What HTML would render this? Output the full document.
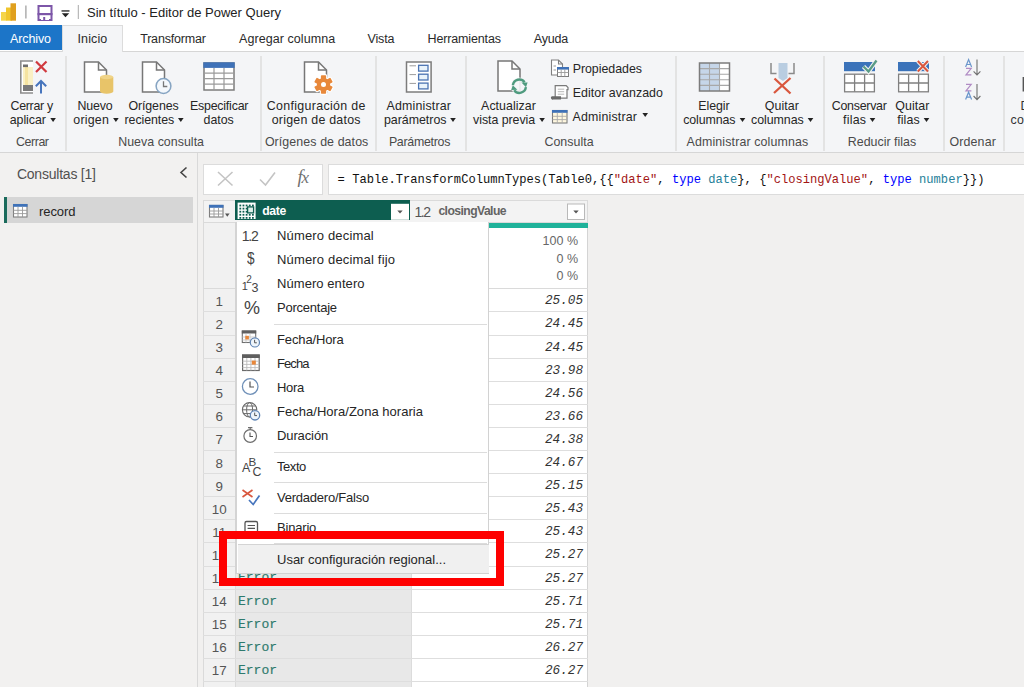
<!DOCTYPE html><html><head><meta charset="utf-8"><style>
*{margin:0;padding:0;box-sizing:border-box}
html,body{width:1024px;height:687px;overflow:hidden;background:#f1f0ef;font-family:"Liberation Sans",sans-serif;color:#252525}
.a{position:absolute;white-space:nowrap}
svg{position:absolute;overflow:visible}
.tab{font-size:12.5px;top:31px;color:#333}
.vsep{width:1.5px;background:#e3e3e3;top:56px;height:95px}
.lbl{font-size:12.2px;color:#333;text-align:center;line-height:14px}
.grp{font-size:12px;color:#555;top:134px}
.car{display:inline-block;width:0;height:0;border-left:3.5px solid transparent;border-right:3.5px solid transparent;border-top:4px solid #333;vertical-align:2px;margin-left:4px}
.mono{font-family:"Liberation Mono",monospace}
.mi{left:276px;font-size:12.5px;color:#252525}
.msep{left:274px;width:213px;height:1px;background:#dcdcdc}
</style></head><body>
<div class="a" style="left:0px;top:0px;width:1024px;height:25px;background:#fff"></div>
<div class="a" style="left:0px;top:25px;width:1024px;height:26px;background:#fff"></div>
<div class="a" style="left:0px;top:51px;width:1024px;height:102px;background:#f4f5f7;border-top:1px solid #d6d6d6;border-bottom:1px solid #d6d6d6"></div>
<svg style="left:0px;top:0px" width="90" height="25" viewBox="0 0 90 25"><defs><linearGradient id="pb" x1="0" y1="0" x2="1" y2="0"><stop offset="0" stop-color="#f2cf3a"/><stop offset="1" stop-color="#e6a21a"/></linearGradient></defs><rect x="1" y="12" width="5.5" height="8.7" fill="#f5d54a"/><rect x="6" y="7.5" width="6" height="13.2" fill="#f0c52c"/><rect x="10.5" y="3.3" width="5.5" height="17.4" fill="#e0a01e"/><rect x="25.3" y="5.5" width="1.2" height="13" fill="#9a9a9a"/><path d="M38.5 6h13v14h-13z" fill="none" stroke="#7d56a8" stroke-width="2"/><rect x="41" y="15.5" width="8" height="4.5" fill="#fff"/><rect x="43.2" y="17" width="2" height="3" fill="#7d56a8"/><rect x="37.5" y="13" width="15" height="2.2" fill="#7d56a8"/><rect x="61.5" y="10.3" width="8" height="1.3" fill="#222"/><path d="M61.8 13.2h7.4l-3.7 4z" fill="#222"/><rect x="77.8" y="5" width="1" height="14" fill="#aaa"/></svg>
<div class="a" style="left:87.00px;top:5.43px;font-size:13px;letter-spacing:0.011px;color:#222;font-family:'Liberation Sans',sans-serif;">Sin título - Editor de Power Query</div>
<div class="a" style="left:0px;top:25px;width:62px;height:25px;background:#1c75c8"></div>
<div class="a" style="left:10.00px;top:31.88px;font-size:12.5px;letter-spacing:-0.115px;color:#fff;font-family:'Liberation Sans',sans-serif;">Archivo</div>
<div class="a" style="left:62px;top:25px;width:61px;height:27px;background:#f4f5f7;border:1px solid #dcdcdc;border-bottom:none"></div>
<div class="a" style="left:77.50px;top:31.98px;font-size:12.5px;letter-spacing:0.113px;color:#2a2a2a;font-family:'Liberation Sans',sans-serif;">Inicio</div>
<div class="a" style="left:140.20px;top:31.98px;font-size:12.5px;letter-spacing:-0.199px;color:#2a2a2a;font-family:'Liberation Sans',sans-serif;">Transformar</div>
<div class="a" style="left:239.00px;top:31.98px;font-size:12.5px;letter-spacing:0.070px;color:#2a2a2a;font-family:'Liberation Sans',sans-serif;">Agregar columna</div>
<div class="a" style="left:367.50px;top:31.98px;font-size:12.5px;letter-spacing:-0.148px;color:#2a2a2a;font-family:'Liberation Sans',sans-serif;">Vista</div>
<div class="a" style="left:427.50px;top:31.98px;font-size:12.5px;letter-spacing:-0.139px;color:#2a2a2a;font-family:'Liberation Sans',sans-serif;">Herramientas</div>
<div class="a" style="left:533.70px;top:31.98px;font-size:12.5px;letter-spacing:-0.163px;color:#2a2a2a;font-family:'Liberation Sans',sans-serif;">Ayuda</div>
<div class="a vsep" style="left:65px"></div>
<div class="a vsep" style="left:260px"></div>
<div class="a vsep" style="left:375px"></div>
<div class="a vsep" style="left:465px"></div>
<div class="a vsep" style="left:675px"></div>
<div class="a vsep" style="left:823px"></div>
<div class="a vsep" style="left:943px"></div>
<div class="a vsep" style="left:1003px"></div>
<div class="a" style="left:10.50px;top:98.77px;font-size:12.4px;letter-spacing:-0.285px;color:#262626;font-family:'Liberation Sans',sans-serif;">Cerrar y</div>
<div class="a" style="left:9.70px;top:112.77px;font-size:12.4px;letter-spacing:-0.036px;color:#262626;font-family:'Liberation Sans',sans-serif;">aplicar</div>
<div class="a" style="left:77.60px;top:98.77px;font-size:12.4px;letter-spacing:-0.184px;color:#262626;font-family:'Liberation Sans',sans-serif;">Nuevo</div>
<div class="a" style="left:73.30px;top:112.77px;font-size:12.4px;letter-spacing:0.206px;color:#262626;font-family:'Liberation Sans',sans-serif;">origen</div>
<div class="a" style="left:128.40px;top:98.77px;font-size:12.4px;letter-spacing:-0.092px;color:#262626;font-family:'Liberation Sans',sans-serif;">Orígenes</div>
<div class="a" style="left:124.50px;top:112.77px;font-size:12.4px;letter-spacing:-0.064px;color:#262626;font-family:'Liberation Sans',sans-serif;">recientes</div>
<div class="a" style="left:189.90px;top:98.77px;font-size:12.4px;letter-spacing:-0.204px;color:#262626;font-family:'Liberation Sans',sans-serif;">Especificar</div>
<div class="a" style="left:203.50px;top:112.77px;font-size:12.4px;letter-spacing:-0.012px;color:#262626;font-family:'Liberation Sans',sans-serif;">datos</div>
<div class="a" style="left:266.80px;top:98.77px;font-size:12.4px;letter-spacing:0.330px;color:#262626;font-family:'Liberation Sans',sans-serif;">Configuración de</div>
<div class="a" style="left:271.70px;top:112.77px;font-size:12.4px;letter-spacing:0.243px;color:#262626;font-family:'Liberation Sans',sans-serif;">origen de datos</div>
<div class="a" style="left:386.60px;top:98.77px;font-size:12.4px;letter-spacing:0.169px;color:#262626;font-family:'Liberation Sans',sans-serif;">Administrar</div>
<div class="a" style="left:384.00px;top:112.77px;font-size:12.4px;letter-spacing:-0.024px;color:#262626;font-family:'Liberation Sans',sans-serif;">parámetros</div>
<div class="a" style="left:481.10px;top:98.77px;font-size:12.4px;letter-spacing:0.029px;color:#262626;font-family:'Liberation Sans',sans-serif;">Actualizar</div>
<div class="a" style="left:473.10px;top:112.77px;font-size:12.4px;letter-spacing:-0.059px;color:#262626;font-family:'Liberation Sans',sans-serif;">vista previa</div>
<div class="a" style="left:698.30px;top:98.77px;font-size:12.4px;letter-spacing:-0.083px;color:#262626;font-family:'Liberation Sans',sans-serif;">Elegir</div>
<div class="a" style="left:683.30px;top:112.77px;font-size:12.4px;letter-spacing:-0.139px;color:#262626;font-family:'Liberation Sans',sans-serif;">columnas</div>
<div class="a" style="left:764.70px;top:98.77px;font-size:12.4px;letter-spacing:0.088px;color:#262626;font-family:'Liberation Sans',sans-serif;">Quitar</div>
<div class="a" style="left:751.00px;top:112.77px;font-size:12.4px;letter-spacing:-0.039px;color:#262626;font-family:'Liberation Sans',sans-serif;">columnas</div>
<div class="a" style="left:831.80px;top:98.77px;font-size:12.4px;letter-spacing:-0.262px;color:#262626;font-family:'Liberation Sans',sans-serif;">Conservar</div>
<div class="a" style="left:843.10px;top:112.77px;font-size:12.4px;letter-spacing:0.215px;color:#262626;font-family:'Liberation Sans',sans-serif;">filas</div>
<div class="a" style="left:895.30px;top:98.77px;font-size:12.4px;letter-spacing:0.088px;color:#262626;font-family:'Liberation Sans',sans-serif;">Quitar</div>
<div class="a" style="left:897.20px;top:112.77px;font-size:12.4px;letter-spacing:0.115px;color:#262626;font-family:'Liberation Sans',sans-serif;">filas</div>
<div class="a" style="left:16.00px;top:134.87px;font-size:12.4px;letter-spacing:-0.425px;color:#4a4a4a;font-family:'Liberation Sans',sans-serif;">Cerrar</div>
<div class="a" style="left:118.20px;top:134.87px;font-size:12.4px;letter-spacing:0.031px;color:#4a4a4a;font-family:'Liberation Sans',sans-serif;">Nueva consulta</div>
<div class="a" style="left:264.90px;top:134.87px;font-size:12.4px;letter-spacing:0.092px;color:#4a4a4a;font-family:'Liberation Sans',sans-serif;">Orígenes de datos</div>
<div class="a" style="left:388.90px;top:134.87px;font-size:12.4px;letter-spacing:-0.286px;color:#4a4a4a;font-family:'Liberation Sans',sans-serif;">Parámetros</div>
<div class="a" style="left:544.40px;top:134.87px;font-size:12.4px;letter-spacing:0.064px;color:#4a4a4a;font-family:'Liberation Sans',sans-serif;">Consulta</div>
<div class="a" style="left:686.60px;top:134.87px;font-size:12.4px;letter-spacing:0.130px;color:#4a4a4a;font-family:'Liberation Sans',sans-serif;">Administrar columnas</div>
<div class="a" style="left:847.80px;top:134.87px;font-size:12.4px;letter-spacing:0.014px;color:#4a4a4a;font-family:'Liberation Sans',sans-serif;">Reducir filas</div>
<div class="a" style="left:949.40px;top:134.87px;font-size:12.4px;letter-spacing:0.171px;color:#4a4a4a;font-family:'Liberation Sans',sans-serif;">Ordenar</div>
<div class="a" style="left:1020.50px;top:98.77px;font-size:12.4px;letter-spacing:0.000px;color:#333;font-family:'Liberation Sans',sans-serif;">D</div>
<div class="a" style="left:1010.50px;top:112.77px;font-size:12.4px;letter-spacing:0.418px;color:#333;font-family:'Liberation Sans',sans-serif;">co</div>
<div class="a" style="left:572.70px;top:61.67px;font-size:12.4px;letter-spacing:-0.033px;color:#262626;font-family:'Liberation Sans',sans-serif;">Propiedades</div>
<div class="a" style="left:572.70px;top:85.97px;font-size:12.4px;letter-spacing:0.048px;color:#262626;font-family:'Liberation Sans',sans-serif;">Editor avanzado</div>
<div class="a" style="left:572.50px;top:109.97px;font-size:12.4px;letter-spacing:0.179px;color:#262626;font-family:'Liberation Sans',sans-serif;">Administrar</div>
<svg style="left:0px;top:0px" width="1024" height="152" viewBox="0 0 1024 152"><path d="M50.30 117.90h5.6l-2.8 4z" fill="#222"/><path d="M113.10 117.90h5.6l-2.8 4z" fill="#222"/><path d="M178.00 117.90h5.6l-2.8 4z" fill="#222"/><path d="M450.20 117.90h5.6l-2.8 4z" fill="#222"/><path d="M539.30 117.90h5.6l-2.8 4z" fill="#222"/><path d="M739.70 117.90h5.6l-2.8 4z" fill="#222"/><path d="M807.70 117.90h5.6l-2.8 4z" fill="#222"/><path d="M869.70 117.90h5.6l-2.8 4z" fill="#222"/><path d="M923.70 117.90h5.6l-2.8 4z" fill="#222"/><path d="M642.4 113h5.6l-2.8 4z" fill="#222"/></svg>
<svg style="left:0px;top:0px" width="1024" height="152" viewBox="0 0 1024 152"><rect x="21" y="61" width="12" height="32" fill="#fff"/><path d="M33 61H20.8V93H33" fill="none" stroke="#8c8c8c" stroke-width="1.6"/><rect x="23" y="67" width="10" height="18" fill="#faf0c4"/><rect x="25" y="67" width="3" height="18" fill="#f5e3a0"/><rect x="23" y="64.5" width="5" height="2.6" fill="#6e6e6e"/><rect x="23" y="85" width="10" height="6" fill="#7a7a7a"/><path d="M36 61.5L46.5 72M46.5 61.5L36 72" stroke="#d13a3f" stroke-width="2.2"/><path d="M41 93.5V81.5M35.8 86.3L41 81 46.2 86.3" stroke="#4775bd" stroke-width="2" fill="none"/><path d="M84.5 62H98.5L106.5 70V92H84.5Z" fill="#fff" stroke="#777" stroke-width="1.5" stroke-linejoin="miter"/><path d="M98.5 62V70H106.5" fill="none" stroke="#777" stroke-width="1.5"/><path d="M100 77V91.5A6.65 2.2 0 0 0 113.3 91.5V77Z" fill="#e8c469"/><ellipse cx="106.65" cy="77" rx="6.65" ry="2.2" fill="#f0d488"/><path d="M142.5 62H156.5L164.5 70V92H142.5Z" fill="#fff" stroke="#777" stroke-width="1.5" stroke-linejoin="miter"/><path d="M156.5 62V70H164.5" fill="none" stroke="#777" stroke-width="1.5"/><circle cx="163.5" cy="86" r="7.4" fill="#f4f8fc" stroke="#86a4c2" stroke-width="1.5"/><path d="M163.5 81.2V86.5H167.3" fill="none" stroke="#777" stroke-width="1.3"/><rect x="204" y="63" width="30" height="27" fill="#fff" stroke="#7c7c7c" stroke-width="1.5"/><rect x="203.3" y="62.3" width="31.4" height="5.6" fill="#3f72b8"/><path d="M204 73.2H234M204 78.6H234M204 84.2H234M214 68V90M224 68V90" stroke="#9a9a9a" stroke-width="1.2"/><path d="M304.5 62H318.5L326.5 70V92H304.5Z" fill="#fff" stroke="#777" stroke-width="1.5" stroke-linejoin="miter"/><path d="M318.5 62V70H326.5" fill="none" stroke="#777" stroke-width="1.5"/><g fill="#fff" stroke="#fff" stroke-width="2.2"><rect x="320.9" y="75.2" width="5.2" height="4.2" rx="0.8" transform="rotate(0 323.5 84.5)"/><rect x="320.9" y="75.2" width="5.2" height="4.2" rx="0.8" transform="rotate(60 323.5 84.5)"/><rect x="320.9" y="75.2" width="5.2" height="4.2" rx="0.8" transform="rotate(120 323.5 84.5)"/><rect x="320.9" y="75.2" width="5.2" height="4.2" rx="0.8" transform="rotate(180 323.5 84.5)"/><rect x="320.9" y="75.2" width="5.2" height="4.2" rx="0.8" transform="rotate(240 323.5 84.5)"/><rect x="320.9" y="75.2" width="5.2" height="4.2" rx="0.8" transform="rotate(300 323.5 84.5)"/><circle cx="323.5" cy="84.5" r="6.6"/></g><g fill="#e8883a"><rect x="320.9" y="75.2" width="5.2" height="4.2" rx="0.8" transform="rotate(0 323.5 84.5)"/><rect x="320.9" y="75.2" width="5.2" height="4.2" rx="0.8" transform="rotate(60 323.5 84.5)"/><rect x="320.9" y="75.2" width="5.2" height="4.2" rx="0.8" transform="rotate(120 323.5 84.5)"/><rect x="320.9" y="75.2" width="5.2" height="4.2" rx="0.8" transform="rotate(180 323.5 84.5)"/><rect x="320.9" y="75.2" width="5.2" height="4.2" rx="0.8" transform="rotate(240 323.5 84.5)"/><rect x="320.9" y="75.2" width="5.2" height="4.2" rx="0.8" transform="rotate(300 323.5 84.5)"/><circle cx="323.5" cy="84.5" r="6.6"/></g><circle cx="323.5" cy="84.5" r="2.5" fill="#fff"/><rect x="406.5" y="62" width="24.6" height="30" fill="#fff" stroke="#7c7c7c" stroke-width="1.5"/><path d="M409.5 65.8H416M409.5 74.6H416M409.5 83.4H416" stroke="#9c9c9c" stroke-width="1"/><rect x="418.6" y="65.3" width="9.4" height="5.8" fill="#e9f3fb" stroke="#4a73b2" stroke-width="1.3"/><rect x="418.6" y="74.2" width="9.4" height="5.8" fill="#e9f3fb" stroke="#4a73b2" stroke-width="1.3"/><rect x="418.6" y="83.1" width="9.4" height="5.8" fill="#e9f3fb" stroke="#4a73b2" stroke-width="1.3"/><path d="M498 61H512L520 69V91H498Z" fill="#fff" stroke="#777" stroke-width="1.5" stroke-linejoin="miter"/><path d="M512 61V69H520" fill="none" stroke="#777" stroke-width="1.5"/><circle cx="519.4" cy="86.2" r="8.6" fill="#f4f5f7" opacity="0.9"/><path d="M512.9 85.2A6.5 6.5 0 0 1 524.6 82.2" fill="none" stroke="#4f9b7f" stroke-width="2.4"/><path d="M521.4 82.6L527.6 82.4L526 87.2Z" fill="#4f9b7f"/><path d="M525.9 87.2A6.5 6.5 0 0 1 514.2 90.2" fill="none" stroke="#4f9b7f" stroke-width="2.4"/><path d="M517.4 89.8L511.2 90L512.8 85.2Z" fill="#4f9b7f"/><path d="M551.5 60H558.5L562.5 64V75H551.5Z" fill="#fff" stroke="#808080" stroke-width="1.1" stroke-linejoin="miter"/><path d="M558.5 60V64H562.5" fill="none" stroke="#808080" stroke-width="1.1"/><path d="M553.5 66H556M553.5 70H556" stroke="#999" stroke-width="1"/><rect x="557.5" y="67.5" width="11" height="9" fill="#fff" stroke="#7c7c7c" stroke-width="1"/><rect x="557" y="67" width="12" height="2.6" fill="#3f72b8"/><path d="M557.5 72.5H568.5M561.2 69.5V76.5M564.8 69.5V76.5" stroke="#9a9a9a" stroke-width="0.9"/><path d="M555.2 85.6H566.2L568 87.6V89.6H567V98.2H555.2Z" fill="#fff" stroke="#7a7a7a" stroke-width="1.2"/><path d="M551.8 96.2H561V99.4H553.3A1.5 1.6 0 0 1 551.8 96.2Z" fill="#6a6a6a"/><path d="M557.8 89.2H564.2M557.8 91.7H564.2M557.8 94.2H564.2" stroke="#b0b0b0" stroke-width="0.9"/><rect x="552.5" y="110.5" width="14.5" height="12.5" fill="#fff8e0" stroke="#7c7c7c" stroke-width="1.1"/><rect x="552" y="110" width="15.5" height="2.8" fill="#3f72b8"/><path d="M552.5 116.3H567M552.5 119.6H567M557.3 112.8V123M562.2 112.8V123" stroke="#aaa" stroke-width="0.9"/><rect x="699.5" y="63" width="20" height="28" fill="#c6d6e9"/><rect x="719.5" y="63" width="10" height="28" fill="#fff"/><path d="M699.5 68.6H729.5M699.5 74.2H729.5M699.5 79.8H729.5M699.5 85.4H729.5M709.5 63V91M719.5 63V91" stroke="#a8a8a8" stroke-width="1.1"/><rect x="699.5" y="63" width="30" height="28" fill="none" stroke="#7c7c7c" stroke-width="1.5"/><path d="M771 63V73.5H776.5M794 63V73.5H788.5" fill="none" stroke="#8a8a8a" stroke-width="1.5"/><path d="M778.5 63H787.5V78L783 81L778.5 78Z" fill="#b9cde1"/><path d="M774.5 78.5L790.5 93.5M790.5 78L774 93" stroke="#d9573e" stroke-width="2.3"/><rect x="844" y="62" width="31" height="9.2" fill="#3b73ba"/><rect x="844.6" y="74.2" width="29.8" height="17.6" fill="#fff" stroke="#808080" stroke-width="1.3"/><path d="M854.6 74.2V91.8M864.6 74.2V91.8M844.6 83H874.4" stroke="#808080" stroke-width="1.3"/><path d="M863.5 66.5L868.5 71.5L876.5 60.5" fill="none" stroke="#f3f3f3" stroke-width="4.5"/><path d="M863.5 66.5L868.5 71.5L876.5 60.5" fill="none" stroke="#5a9c86" stroke-width="2.3"/><rect x="898" y="62" width="31" height="9.2" fill="#3b73ba"/><rect x="898.6" y="74.2" width="29.8" height="17.6" fill="#fff" stroke="#808080" stroke-width="1.3"/><path d="M908.6 74.2V91.8M918.6 74.2V91.8M898.6 83H928.4" stroke="#808080" stroke-width="1.3"/><path d="M917.8 61L928 71.5M928 61L917.8 71.5" stroke="#f3f3f3" stroke-width="4"/><path d="M917.8 61L928 71.5M928 61L917.8 71.5" stroke="#d9573e" stroke-width="2"/><path d="M965.6 67L968.6 59.6L971.6 67M966.5 64.5H970.7" fill="none" stroke="#6a96cc" stroke-width="1.2"/><path d="M966 68.4H971.2L966 74.8H971.4" fill="none" stroke="#b08bc4" stroke-width="1.2"/><path d="M977 59.5V75M973.6 71.4L977 75L980.4 71.4" fill="none" stroke="#707070" stroke-width="1.1"/><path d="M966 84.4H971.2L966 90.8H971.4" fill="none" stroke="#b08bc4" stroke-width="1.2"/><path d="M965.6 99.6L968.6 92.2L971.6 99.6M966.5 97.1H970.7" fill="none" stroke="#6a96cc" stroke-width="1.2"/><path d="M977 84V99.6M973.6 96L977 99.6L980.4 96" fill="none" stroke="#707070" stroke-width="1.1"/><rect x="1022.6" y="77" width="2" height="14.5" fill="#555"/></svg>
<div class="a" style="left:0px;top:153px;width:198.4px;height:534px;background:#f2f1f0;border-right:1.4px solid #d9d9d9"></div>
<div class="a" style="left:16.90px;top:165.83px;font-size:14px;letter-spacing:-0.219px;color:#505050;font-family:'Liberation Sans',sans-serif;">Consultas [1]</div>
<svg style="left:0px;top:152px" width="197" height="60" viewBox="0 0 197 60"><path d="M186.5 15.5L181 20.5L186.5 25.5" fill="none" stroke="#444" stroke-width="1.6"/></svg>
<div class="a" style="left:4px;top:197px;width:189px;height:26px;background:#d6d6d6"></div>
<div class="a" style="left:4.4px;top:197px;width:2.2px;height:26px;background:#1b6b5c"></div>
<svg style="left:0px;top:0px" width="60" height="230" viewBox="0 0 60 230"><rect x="13.5" y="204.5" width="13.5" height="12.5" fill="#fff" stroke="#808080" stroke-width="1.1"/><rect x="13" y="204" width="14.5" height="2.8" fill="#3f72b8"/><path d="M13.5 210.3H27M13.5 213.6H27M18 206.8V217M22.5 206.8V217" stroke="#9a9a9a" stroke-width="0.9"/></svg>
<div class="a" style="left:39.00px;top:204.03px;font-size:13px;letter-spacing:-0.071px;color:#252525;font-family:'Liberation Sans',sans-serif;">record</div>
<div class="a" style="left:203px;top:164px;width:120px;height:30.5px;background:#fff;border:1px solid #dcdcdc"></div>
<div class="a" style="left:327.7px;top:164px;width:720px;height:30.5px;background:#fff;border:1px solid #dcdcdc"></div>
<svg style="left:0px;top:0px" width="340" height="200" viewBox="0 0 340 200"><path d="M218 172L232.5 185.5M232.5 172L218 185.5" stroke="#c4c4c4" stroke-width="1.6"/><path d="M260 179.5L265.5 185L275 172.5" fill="none" stroke="#c4c4c4" stroke-width="1.6"/></svg>
<div class="a " style="left:297.5px;top:166.5px;font-family:'Liberation Serif',serif;font-size:18.5px;color:#707070;letter-spacing:-1.2px"><i>f</i><i style="font-size:17px">x</i></div>
<div class="a mono" style="left:337.6px;top:172.6px;font-size:12.11px;color:#111">= Table.TransformColumnTypes(Table0,{{<span style="color:#a31515">"date"</span>, <span style="color:#0000ff">type</span> <span style="color:#267f99">date</span>}, {<span style="color:#a31515">"closingValue"</span>, <span style="color:#0000ff">type</span> <span style="color:#267f99">number</span>}})</div>
<div class="a" style="left:203px;top:200px;width:385px;height:23px;background:#f3f3f3;border:1px solid #dadada"></div>
<svg style="left:0px;top:0px" width="240" height="225" viewBox="0 0 240 225"><rect x="209.5" y="205.5" width="13.5" height="11.5" fill="#fff" stroke="#7c7c7c" stroke-width="1.1"/><rect x="209" y="204.8" width="14.5" height="3" fill="#3f72b8"/><path d="M209.5 211H223M209.5 214H223M214 207.8V217M218.5 207.8V217" stroke="#9a9a9a" stroke-width="0.9"/><path d="M225 213.6H229.6L227.3 216.7Z" fill="#555"/></svg>
<div class="a" style="left:203px;top:223px;width:32.5px;height:464px;background:#f1f1f1;border-left:1px solid #dadada;border-right:1px solid #dadada"></div>
<div class="a" style="left:235.5px;top:223px;width:175.5px;height:464px;background:#e8e8e8"></div>
<div class="a" style="left:411px;top:223px;width:177px;height:464px;background:#fff;border-left:1px solid #dcdcdc;border-right:1px solid #d4d4d4"></div>
<div class="a" style="left:236px;top:223.4px;width:352px;height:4.3px;background:#1fb29a"></div>
<div class="a" style="left:203px;top:288.3px;width:385px;height:1px;background:#dadada"></div>
<div class="a" style="left:478px;top:234.2px;width:100px;text-align:right;font-size:12.5px;color:#676767">100 %</div>
<div class="a" style="left:478px;top:251.7px;width:100px;text-align:right;font-size:12.5px;color:#676767">0 %</div>
<div class="a" style="left:478px;top:269.2px;width:100px;text-align:right;font-size:12.5px;color:#676767">0 %</div>
<div class="a" style="left:203px;top:311.4px;width:385px;height:1px;background:#dedede"></div>
<div class="a" style="left:203px;top:334.5px;width:385px;height:1px;background:#dedede"></div>
<div class="a" style="left:203px;top:357.6px;width:385px;height:1px;background:#dedede"></div>
<div class="a" style="left:203px;top:380.7px;width:385px;height:1px;background:#dedede"></div>
<div class="a" style="left:203px;top:403.8px;width:385px;height:1px;background:#dedede"></div>
<div class="a" style="left:203px;top:426.9px;width:385px;height:1px;background:#dedede"></div>
<div class="a" style="left:203px;top:450.0px;width:385px;height:1px;background:#dedede"></div>
<div class="a" style="left:203px;top:473.1px;width:385px;height:1px;background:#dedede"></div>
<div class="a" style="left:203px;top:496.2px;width:385px;height:1px;background:#dedede"></div>
<div class="a" style="left:203px;top:519.3px;width:385px;height:1px;background:#dedede"></div>
<div class="a" style="left:203px;top:542.4px;width:385px;height:1px;background:#dedede"></div>
<div class="a" style="left:203px;top:565.5px;width:385px;height:1px;background:#dedede"></div>
<div class="a" style="left:203px;top:588.6px;width:385px;height:1px;background:#dedede"></div>
<div class="a" style="left:203px;top:611.7px;width:385px;height:1px;background:#dedede"></div>
<div class="a" style="left:203px;top:634.8px;width:385px;height:1px;background:#dedede"></div>
<div class="a" style="left:203px;top:657.9px;width:385px;height:1px;background:#dedede"></div>
<div class="a" style="left:203px;top:681.0px;width:385px;height:1px;background:#dedede"></div>
<div class="a" style="left:203px;top:704.1px;width:385px;height:1px;background:#dedede"></div>
<div class="a" style="left:203.3px;top:293.80px;width:32px;text-align:center;font-size:13.4px;color:#555">1</div>
<div class="a mono" style="left:480px;top:293.30px;width:103px;text-align:right;font-size:12.7px;font-style:italic;color:#333">25.05</div>
<div class="a mono" style="left:238px;top:293.20px;font-size:13px;color:#2e7a6d;-webkit-text-stroke:0.15px #2e7a6d">Error</div>
<div class="a" style="left:203.3px;top:316.90px;width:32px;text-align:center;font-size:13.4px;color:#555">2</div>
<div class="a mono" style="left:480px;top:316.40px;width:103px;text-align:right;font-size:12.7px;font-style:italic;color:#333">24.45</div>
<div class="a mono" style="left:238px;top:316.30px;font-size:13px;color:#2e7a6d;-webkit-text-stroke:0.15px #2e7a6d">Error</div>
<div class="a" style="left:203.3px;top:340.00px;width:32px;text-align:center;font-size:13.4px;color:#555">3</div>
<div class="a mono" style="left:480px;top:339.50px;width:103px;text-align:right;font-size:12.7px;font-style:italic;color:#333">24.45</div>
<div class="a mono" style="left:238px;top:339.40px;font-size:13px;color:#2e7a6d;-webkit-text-stroke:0.15px #2e7a6d">Error</div>
<div class="a" style="left:203.3px;top:363.10px;width:32px;text-align:center;font-size:13.4px;color:#555">4</div>
<div class="a mono" style="left:480px;top:362.60px;width:103px;text-align:right;font-size:12.7px;font-style:italic;color:#333">23.98</div>
<div class="a mono" style="left:238px;top:362.50px;font-size:13px;color:#2e7a6d;-webkit-text-stroke:0.15px #2e7a6d">Error</div>
<div class="a" style="left:203.3px;top:386.20px;width:32px;text-align:center;font-size:13.4px;color:#555">5</div>
<div class="a mono" style="left:480px;top:385.70px;width:103px;text-align:right;font-size:12.7px;font-style:italic;color:#333">24.56</div>
<div class="a mono" style="left:238px;top:385.60px;font-size:13px;color:#2e7a6d;-webkit-text-stroke:0.15px #2e7a6d">Error</div>
<div class="a" style="left:203.3px;top:409.30px;width:32px;text-align:center;font-size:13.4px;color:#555">6</div>
<div class="a mono" style="left:480px;top:408.80px;width:103px;text-align:right;font-size:12.7px;font-style:italic;color:#333">23.66</div>
<div class="a mono" style="left:238px;top:408.70px;font-size:13px;color:#2e7a6d;-webkit-text-stroke:0.15px #2e7a6d">Error</div>
<div class="a" style="left:203.3px;top:432.40px;width:32px;text-align:center;font-size:13.4px;color:#555">7</div>
<div class="a mono" style="left:480px;top:431.90px;width:103px;text-align:right;font-size:12.7px;font-style:italic;color:#333">24.38</div>
<div class="a mono" style="left:238px;top:431.80px;font-size:13px;color:#2e7a6d;-webkit-text-stroke:0.15px #2e7a6d">Error</div>
<div class="a" style="left:203.3px;top:455.50px;width:32px;text-align:center;font-size:13.4px;color:#555">8</div>
<div class="a mono" style="left:480px;top:455.00px;width:103px;text-align:right;font-size:12.7px;font-style:italic;color:#333">24.67</div>
<div class="a mono" style="left:238px;top:454.90px;font-size:13px;color:#2e7a6d;-webkit-text-stroke:0.15px #2e7a6d">Error</div>
<div class="a" style="left:203.3px;top:478.60px;width:32px;text-align:center;font-size:13.4px;color:#555">9</div>
<div class="a mono" style="left:480px;top:478.10px;width:103px;text-align:right;font-size:12.7px;font-style:italic;color:#333">25.15</div>
<div class="a mono" style="left:238px;top:478.00px;font-size:13px;color:#2e7a6d;-webkit-text-stroke:0.15px #2e7a6d">Error</div>
<div class="a" style="left:203.3px;top:501.70px;width:32px;text-align:center;font-size:13.4px;color:#555">10</div>
<div class="a mono" style="left:480px;top:501.20px;width:103px;text-align:right;font-size:12.7px;font-style:italic;color:#333">25.43</div>
<div class="a mono" style="left:238px;top:501.10px;font-size:13px;color:#2e7a6d;-webkit-text-stroke:0.15px #2e7a6d">Error</div>
<div class="a" style="left:203.3px;top:524.80px;width:32px;text-align:center;font-size:13.4px;color:#555">11</div>
<div class="a mono" style="left:480px;top:524.30px;width:103px;text-align:right;font-size:12.7px;font-style:italic;color:#333">25.43</div>
<div class="a mono" style="left:238px;top:524.20px;font-size:13px;color:#2e7a6d;-webkit-text-stroke:0.15px #2e7a6d">Error</div>
<div class="a" style="left:203.3px;top:547.90px;width:32px;text-align:center;font-size:13.4px;color:#555">12</div>
<div class="a mono" style="left:480px;top:547.40px;width:103px;text-align:right;font-size:12.7px;font-style:italic;color:#333">25.27</div>
<div class="a mono" style="left:238px;top:547.30px;font-size:13px;color:#2e7a6d;-webkit-text-stroke:0.15px #2e7a6d">Error</div>
<div class="a" style="left:203.3px;top:571.00px;width:32px;text-align:center;font-size:13.4px;color:#555">13</div>
<div class="a mono" style="left:480px;top:570.50px;width:103px;text-align:right;font-size:12.7px;font-style:italic;color:#333">25.27</div>
<div class="a mono" style="left:238px;top:570.40px;font-size:13px;color:#2e7a6d;-webkit-text-stroke:0.15px #2e7a6d">Error</div>
<div class="a" style="left:203.3px;top:594.10px;width:32px;text-align:center;font-size:13.4px;color:#555">14</div>
<div class="a mono" style="left:480px;top:593.60px;width:103px;text-align:right;font-size:12.7px;font-style:italic;color:#333">25.71</div>
<div class="a mono" style="left:238px;top:593.50px;font-size:13px;color:#2e7a6d;-webkit-text-stroke:0.15px #2e7a6d">Error</div>
<div class="a" style="left:203.3px;top:617.20px;width:32px;text-align:center;font-size:13.4px;color:#555">15</div>
<div class="a mono" style="left:480px;top:616.70px;width:103px;text-align:right;font-size:12.7px;font-style:italic;color:#333">25.71</div>
<div class="a mono" style="left:238px;top:616.60px;font-size:13px;color:#2e7a6d;-webkit-text-stroke:0.15px #2e7a6d">Error</div>
<div class="a" style="left:203.3px;top:640.30px;width:32px;text-align:center;font-size:13.4px;color:#555">16</div>
<div class="a mono" style="left:480px;top:639.80px;width:103px;text-align:right;font-size:12.7px;font-style:italic;color:#333">26.27</div>
<div class="a mono" style="left:238px;top:639.70px;font-size:13px;color:#2e7a6d;-webkit-text-stroke:0.15px #2e7a6d">Error</div>
<div class="a" style="left:203.3px;top:663.40px;width:32px;text-align:center;font-size:13.4px;color:#555">17</div>
<div class="a mono" style="left:480px;top:662.90px;width:103px;text-align:right;font-size:12.7px;font-style:italic;color:#333">26.27</div>
<div class="a mono" style="left:238px;top:662.80px;font-size:13px;color:#2e7a6d;-webkit-text-stroke:0.15px #2e7a6d">Error</div>
<div class="a" style="left:235.4px;top:200.4px;width:175px;height:20px;background:#0d5e50"></div>
<svg style="left:0px;top:0px" width="600" height="225" viewBox="0 0 600 225"><rect x="237.6" y="202.6" width="18" height="16.4" fill="#fff"/><rect x="239.40" y="204.60" width="1.8" height="1.8" fill="#0d5e50"/><rect x="242.55" y="204.60" width="1.8" height="1.8" fill="#0d5e50"/><rect x="245.70" y="204.60" width="1.8" height="1.8" fill="#0d5e50"/><rect x="248.85" y="204.60" width="1.8" height="1.8" fill="#0d5e50"/><rect x="252.00" y="204.60" width="1.8" height="1.8" fill="#0d5e50"/><rect x="239.40" y="207.70" width="1.8" height="1.8" fill="#0d5e50"/><rect x="242.55" y="207.70" width="1.8" height="1.8" fill="#0d5e50"/><rect x="245.70" y="207.70" width="1.8" height="1.8" fill="#0d5e50"/><rect x="248.85" y="207.70" width="1.8" height="1.8" fill="#0d5e50"/><rect x="252.00" y="207.70" width="1.8" height="1.8" fill="#0d5e50"/><rect x="239.40" y="210.80" width="1.8" height="1.8" fill="#0d5e50"/><rect x="242.55" y="210.80" width="1.8" height="1.8" fill="#0d5e50"/><rect x="245.70" y="210.80" width="1.8" height="1.8" fill="#0d5e50"/><rect x="248.85" y="210.80" width="1.8" height="1.8" fill="#0d5e50"/><rect x="252.00" y="210.80" width="1.8" height="1.8" fill="#0d5e50"/><rect x="239.40" y="213.90" width="1.8" height="1.8" fill="#0d5e50"/><rect x="242.55" y="213.90" width="1.8" height="1.8" fill="#0d5e50"/><rect x="245.70" y="213.90" width="1.8" height="1.8" fill="#0d5e50"/><rect x="248.85" y="213.90" width="1.8" height="1.8" fill="#0d5e50"/><rect x="252.00" y="213.90" width="1.8" height="1.8" fill="#0d5e50"/><rect x="239.40" y="217.00" width="1.8" height="1.8" fill="#0d5e50"/><rect x="242.55" y="217.00" width="1.8" height="1.8" fill="#0d5e50"/><rect x="245.70" y="217.00" width="1.8" height="1.8" fill="#0d5e50"/><rect x="248.85" y="217.00" width="1.8" height="1.8" fill="#0d5e50"/><rect x="252.00" y="217.00" width="1.8" height="1.8" fill="#0d5e50"/><rect x="247.6" y="206.9" width="6" height="6" fill="#dff0ea" stroke="#0d5e50" stroke-width="1.3"/><rect x="391" y="203.8" width="18" height="16" fill="#fff"/><path d="M397.3 210.5H402.7L400 213.6Z" fill="#555"/><rect x="567.5" y="204" width="17" height="15.5" fill="#fff" stroke="#b9b9b9" stroke-width="1"/><path d="M573.3 210.5H578.7L576 213.6Z" fill="#555"/></svg>
<div class="a" style="left:262.20px;top:204.46px;font-size:12.2px;letter-spacing:-0.357px;color:#fff;font-family:'Liberation Sans',sans-serif;font-weight:bold;">date</div>
<div class="a" style="left:414.40px;top:203.93px;font-size:14px;letter-spacing:-1.380px;color:#555;font-family:'Liberation Sans',sans-serif;">1.2</div>
<div class="a" style="left:438.40px;top:204.26px;font-size:12.2px;letter-spacing:-0.579px;color:#646464;font-family:'Liberation Sans',sans-serif;font-weight:bold;">closingValue</div>
<div class="a" style="left:235.2px;top:222px;width:254.3px;height:351.5px;background:#fff;border-left:2.6px solid #d4d4d4;border-right:1px solid #d2d2d2;border-bottom:1px solid #d2d2d2"></div>
<div class="a" style="left:274px;top:323.75px;width:213px;height:1px;background:#dcdcdc"></div>
<div class="a" style="left:274px;top:451.5px;width:213px;height:1px;background:#dcdcdc"></div>
<div class="a" style="left:274px;top:482.25px;width:213px;height:1px;background:#dcdcdc"></div>
<div class="a" style="left:274px;top:513.3px;width:213px;height:1px;background:#dcdcdc"></div>
<div class="a" style="left:274px;top:543.3px;width:213px;height:1px;background:#dcdcdc"></div>
<div class="a" style="left:237.5px;top:544px;width:251px;height:29px;background:#f0f0f0;border-top:1px solid #d4d4d4"></div>
<div class="a" style="left:277.00px;top:228.23px;font-size:13px;letter-spacing:0.162px;color:#262626;font-family:'Liberation Sans',sans-serif;">Número decimal</div>
<div class="a" style="left:277.00px;top:252.48px;font-size:13px;letter-spacing:0.173px;color:#262626;font-family:'Liberation Sans',sans-serif;">Número decimal fijo</div>
<div class="a" style="left:277.00px;top:276.23px;font-size:13px;letter-spacing:0.066px;color:#262626;font-family:'Liberation Sans',sans-serif;">Número entero</div>
<div class="a" style="left:277.00px;top:300.23px;font-size:13px;letter-spacing:-0.238px;color:#262626;font-family:'Liberation Sans',sans-serif;">Porcentaje</div>
<div class="a" style="left:277.00px;top:331.98px;font-size:13px;letter-spacing:-0.131px;color:#262626;font-family:'Liberation Sans',sans-serif;">Fecha/Hora</div>
<div class="a" style="left:277.00px;top:355.73px;font-size:13px;letter-spacing:-0.910px;color:#262626;font-family:'Liberation Sans',sans-serif;">Fecha</div>
<div class="a" style="left:277.00px;top:379.98px;font-size:13px;letter-spacing:-0.320px;color:#262626;font-family:'Liberation Sans',sans-serif;">Hora</div>
<div class="a" style="left:277.00px;top:403.98px;font-size:13px;letter-spacing:0.033px;color:#262626;font-family:'Liberation Sans',sans-serif;">Fecha/Hora/Zona horaria</div>
<div class="a" style="left:277.00px;top:428.23px;font-size:13px;letter-spacing:-0.112px;color:#262626;font-family:'Liberation Sans',sans-serif;">Duración</div>
<div class="a" style="left:277.00px;top:459.43px;font-size:13px;letter-spacing:-0.442px;color:#262626;font-family:'Liberation Sans',sans-serif;">Texto</div>
<div class="a" style="left:277.00px;top:490.03px;font-size:13px;letter-spacing:-0.228px;color:#262626;font-family:'Liberation Sans',sans-serif;">Verdadero/Falso</div>
<div class="a" style="left:277.00px;top:520.23px;font-size:13px;letter-spacing:-0.194px;color:#262626;font-family:'Liberation Sans',sans-serif;">Binario</div>
<div class="a" style="left:277.00px;top:551.93px;font-size:13px;letter-spacing:-0.003px;color:#262626;font-family:'Liberation Sans',sans-serif;">Usar configuración regional...</div>
<div class="a" style="left:241.70px;top:227.83px;font-size:14px;letter-spacing:-1.180px;color:#444;font-family:'Liberation Sans',sans-serif;">1.2</div>
<div class="a" style="left:246.70px;top:250.12px;font-size:16px;letter-spacing:0.000px;color:#444;font-family:'Liberation Sans',sans-serif;transform:scaleX(0.85);transform-origin:0 0">$</div>
<div class="a" style="left:241.8px;top:279px;font-size:11px;color:#444;line-height:14px">1</div>
<div class="a" style="left:246.3px;top:274px;font-size:10px;color:#4a4a4a;line-height:12px">2</div>
<div class="a" style="left:251.5px;top:280.8px;font-size:12.5px;color:#444;line-height:14px">3</div>
<div class="a" style="left:244.00px;top:298.30px;font-size:18px;letter-spacing:0.000px;color:#444;font-family:'Liberation Sans',sans-serif;">%</div>
<svg style="left:0px;top:0px" width="300" height="580" viewBox="0 0 300 580"><rect x="242.3" y="331" width="13.4" height="11.5" fill="#fff" stroke="#707070" stroke-width="1.1"/><rect x="241.8" y="330.5" width="14.4" height="3" fill="#606060"/><path d="M242.3 337H255.7M242.3 340H255.7M246 333.5V342.5M250 333.5V342.5" stroke="#c0c0c0" stroke-width="0.8"/><rect x="245.3" y="335.8" width="3.6" height="3.6" fill="#e8873a"/><circle cx="254.9" cy="342.4" r="4.6" fill="#eef5fb" stroke="#5f84b4" stroke-width="1.2"/><path d="M254.6 339.8V342.8H256.8" fill="none" stroke="#555" stroke-width="1"/><rect x="242.6" y="355" width="16.6" height="15.5" fill="#fff" stroke="#6a6a6a" stroke-width="1.2"/><rect x="242" y="354.5" width="17.7" height="3.5" fill="#5e5e5e"/><path d="M242.6 361.2H259.2M242.6 364.4H259.2M242.6 367.6H259.2M246.8 358V370.5M250.9 358V370.5M255 358V370.5" stroke="#bcbcbc" stroke-width="0.9"/><rect x="251.8" y="360.6" width="4" height="4" fill="#e8873a"/><circle cx="250.2" cy="386.5" r="7.8" fill="#fff" stroke="#6f90b8" stroke-width="1.3"/><path d="M250 381.5V387H254" fill="none" stroke="#555" stroke-width="1.2"/><circle cx="249.6" cy="409.8" r="7.2" fill="#fff" stroke="#6a6a6a" stroke-width="1.1"/><ellipse cx="249.6" cy="409.8" rx="3" ry="7.2" fill="none" stroke="#6a6a6a" stroke-width="1"/><path d="M242.4 409.8H256.8M243.5 406H255.7M243.5 413.6H255.7" stroke="#6a6a6a" stroke-width="1"/><circle cx="255" cy="415.3" r="4.7" fill="#eef5fb" stroke="#5f84b4" stroke-width="1.3"/><path d="M254.7 412.6V415.6H257" fill="none" stroke="#555" stroke-width="1"/><circle cx="250.2" cy="436" r="6.3" fill="#fff" stroke="#6e6e6e" stroke-width="1.2"/><path d="M248 427.6H252.4M250.2 427.6V429.7" stroke="#6e6e6e" stroke-width="1.2"/><path d="M250 432.5V436.5H253" fill="none" stroke="#555" stroke-width="1.1"/><text x="242" y="472.3" font-family="Liberation Sans" font-size="12.3" fill="#444">A</text><text x="248.6" y="466" font-family="Liberation Sans" font-size="11.6" fill="#444">B</text><text x="252.6" y="476.2" font-family="Liberation Sans" font-size="12.3" fill="#444">C</text><path d="M242.5 490L252.5 497M252.5 490L242.5 497" stroke="#d9573e" stroke-width="1.6"/><path d="M249 500L253.2 504.5L259.5 495.5" fill="none" stroke="#4775bd" stroke-width="1.7"/><rect x="245" y="521.5" width="12.5" height="13" rx="1.5" fill="#fff" stroke="#555" stroke-width="1.3"/><path d="M247.6 525.5H255M247.6 528.3H255" stroke="#555" stroke-width="1.2"/></svg>
<div class="a" style="left:219px;top:531px;width:284.7px;height:55px;border:8.3px solid #fe0000"></div>
</body></html>
